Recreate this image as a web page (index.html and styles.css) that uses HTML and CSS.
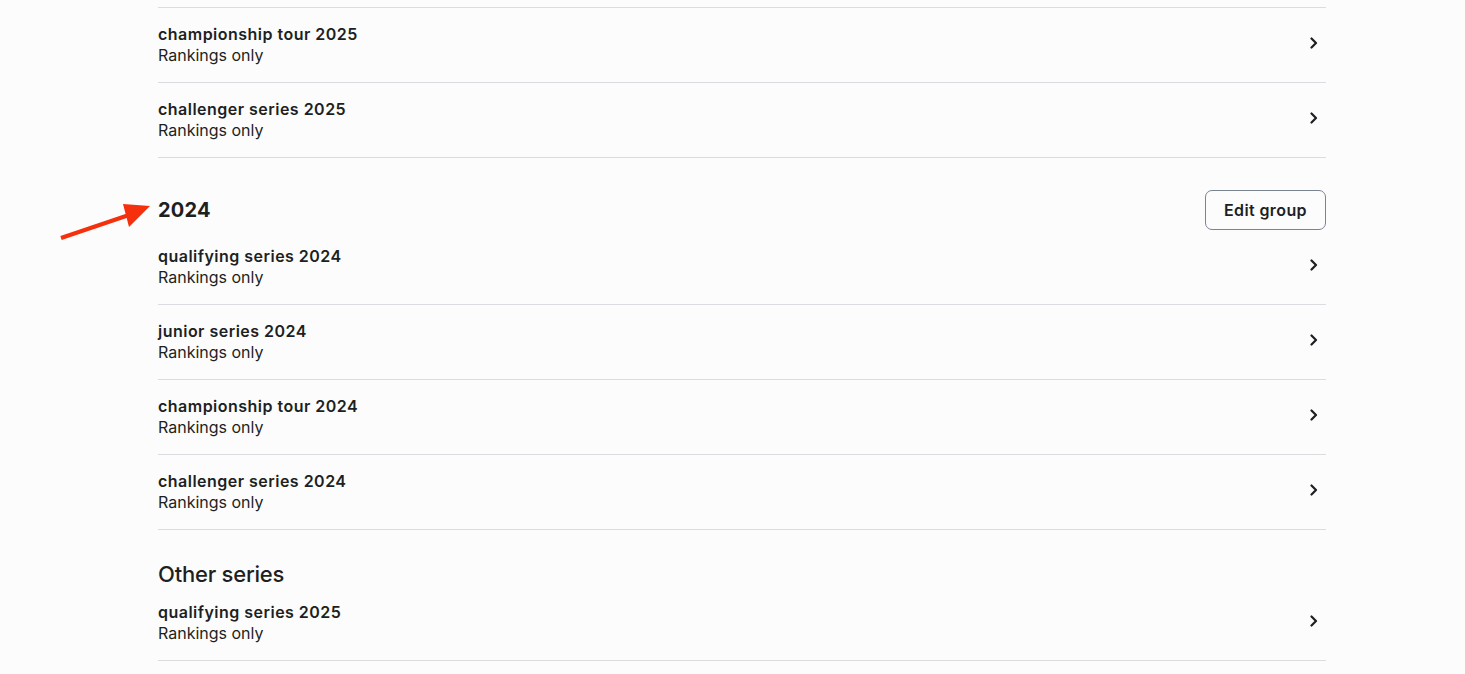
FILE: index.html
```html
<!DOCTYPE html>
<html lang="en">
<head>
<meta charset="utf-8">
<title>Series groups</title>
<link rel="stylesheet" href="styles.css">
</head>
<body>
<main class="page">
  <ul class="list list-top">
    <li class="row"><div class="row-text"><span class="row-title">championship tour 2025</span><span class="row-sub">Rankings only</span></div><svg class="chev" viewBox="0 0 8 12" width="8" height="12"><path d="M1.5 1.5 L6 6 L1.5 10.5" fill="none" stroke="currentColor" stroke-width="2.2" stroke-linecap="round" stroke-linejoin="round"/></svg></li>
    <li class="row"><div class="row-text"><span class="row-title">challenger series 2025</span><span class="row-sub">Rankings only</span></div><svg class="chev" viewBox="0 0 8 12" width="8" height="12"><path d="M1.5 1.5 L6 6 L1.5 10.5" fill="none" stroke="currentColor" stroke-width="2.2" stroke-linecap="round" stroke-linejoin="round"/></svg></li>
  </ul>

  <section class="group">
    <header class="group-head">
      <h2 class="group-title group-title-bold">2024</h2>
      <button class="btn" type="button">Edit group</button>
      <svg class="annot-arrow" viewBox="0 0 100 40" width="100" height="40"><line x1="2" y1="36" x2="70" y2="13" stroke="#f5300d" stroke-width="4"/><polygon points="91,4 64,2 70,25" fill="#f5300d"/></svg>
    </header>
    <ul class="list">
      <li class="row"><div class="row-text"><span class="row-title">qualifying series 2024</span><span class="row-sub">Rankings only</span></div><svg class="chev" viewBox="0 0 8 12" width="8" height="12"><path d="M1.5 1.5 L6 6 L1.5 10.5" fill="none" stroke="currentColor" stroke-width="2.2" stroke-linecap="round" stroke-linejoin="round"/></svg></li>
      <li class="row"><div class="row-text"><span class="row-title">junior series 2024</span><span class="row-sub">Rankings only</span></div><svg class="chev" viewBox="0 0 8 12" width="8" height="12"><path d="M1.5 1.5 L6 6 L1.5 10.5" fill="none" stroke="currentColor" stroke-width="2.2" stroke-linecap="round" stroke-linejoin="round"/></svg></li>
      <li class="row"><div class="row-text"><span class="row-title">championship tour 2024</span><span class="row-sub">Rankings only</span></div><svg class="chev" viewBox="0 0 8 12" width="8" height="12"><path d="M1.5 1.5 L6 6 L1.5 10.5" fill="none" stroke="currentColor" stroke-width="2.2" stroke-linecap="round" stroke-linejoin="round"/></svg></li>
      <li class="row"><div class="row-text"><span class="row-title">challenger series 2024</span><span class="row-sub">Rankings only</span></div><svg class="chev" viewBox="0 0 8 12" width="8" height="12"><path d="M1.5 1.5 L6 6 L1.5 10.5" fill="none" stroke="currentColor" stroke-width="2.2" stroke-linecap="round" stroke-linejoin="round"/></svg></li>
    </ul>
  </section>

  <section class="group">
    <header class="group-head group-head-plain">
      <h2 class="group-title">Other series</h2>
    </header>
    <ul class="list">
      <li class="row"><div class="row-text"><span class="row-title">qualifying series 2025</span><span class="row-sub">Rankings only</span></div><svg class="chev" viewBox="0 0 8 12" width="8" height="12"><path d="M1.5 1.5 L6 6 L1.5 10.5" fill="none" stroke="currentColor" stroke-width="2.2" stroke-linecap="round" stroke-linejoin="round"/></svg></li>
    </ul>
  </section>
</main>
</body>
</html>
```

FILE: styles.css
```css
html, body {
  margin: 0;
  padding: 0;
  background: #fcfcfc;
}
body {
  font-family: "Inter", "Liberation Sans", sans-serif;
  color: #1e1f22;
}
.page {
  width: 1168px;
  margin: 0 0 0 158px;
  padding-top: 7px;
}
.list {
  list-style: none;
  margin: 0;
  padding: 0;
}
.list-top {
  border-top: 1px solid #dcdce0;
}
.row {
  display: flex;
  align-items: center;
  justify-content: space-between;
  padding: 16px 0;
  border-bottom: 1px solid #dcdce0;
}
.row-text {
  display: flex;
  flex-direction: column;
}
.row-title {
  font-size: 16px;
  line-height: 21px;
  font-weight: 600;
  letter-spacing: 0.03em;
}
.row-sub {
  font-size: 16px;
  line-height: 21px;
  font-weight: 400;
}
.chev {
  color: #1e1f22;
  margin-right: 8px;
  margin-bottom: 4px;
}
.group {
  margin-top: 32px;
}
.group-head {
  position: relative;
  display: flex;
  align-items: center;
  justify-content: space-between;
}
.group-head-plain {
  height: 24px;
}
.group-title {
  margin: 0;
  font-size: 22px;
  line-height: 24px;
  font-weight: 500;
  letter-spacing: -0.01em;
}
.group-title-bold {
  font-size: 20px;
  font-weight: 700;
  letter-spacing: 0.01em;
}
.btn {
  font-family: inherit;
  font-size: 16px;
  font-weight: 600;
  letter-spacing: 0.025em;
  color: #1e1f22;
  background: #fcfcfc;
  border: 1px solid #7b8493;
  border-radius: 7px;
  height: 40px;
  padding: 0 18px;
}
.annot-arrow {
  position: absolute;
  left: -99px;
  top: 12px;
}
```
